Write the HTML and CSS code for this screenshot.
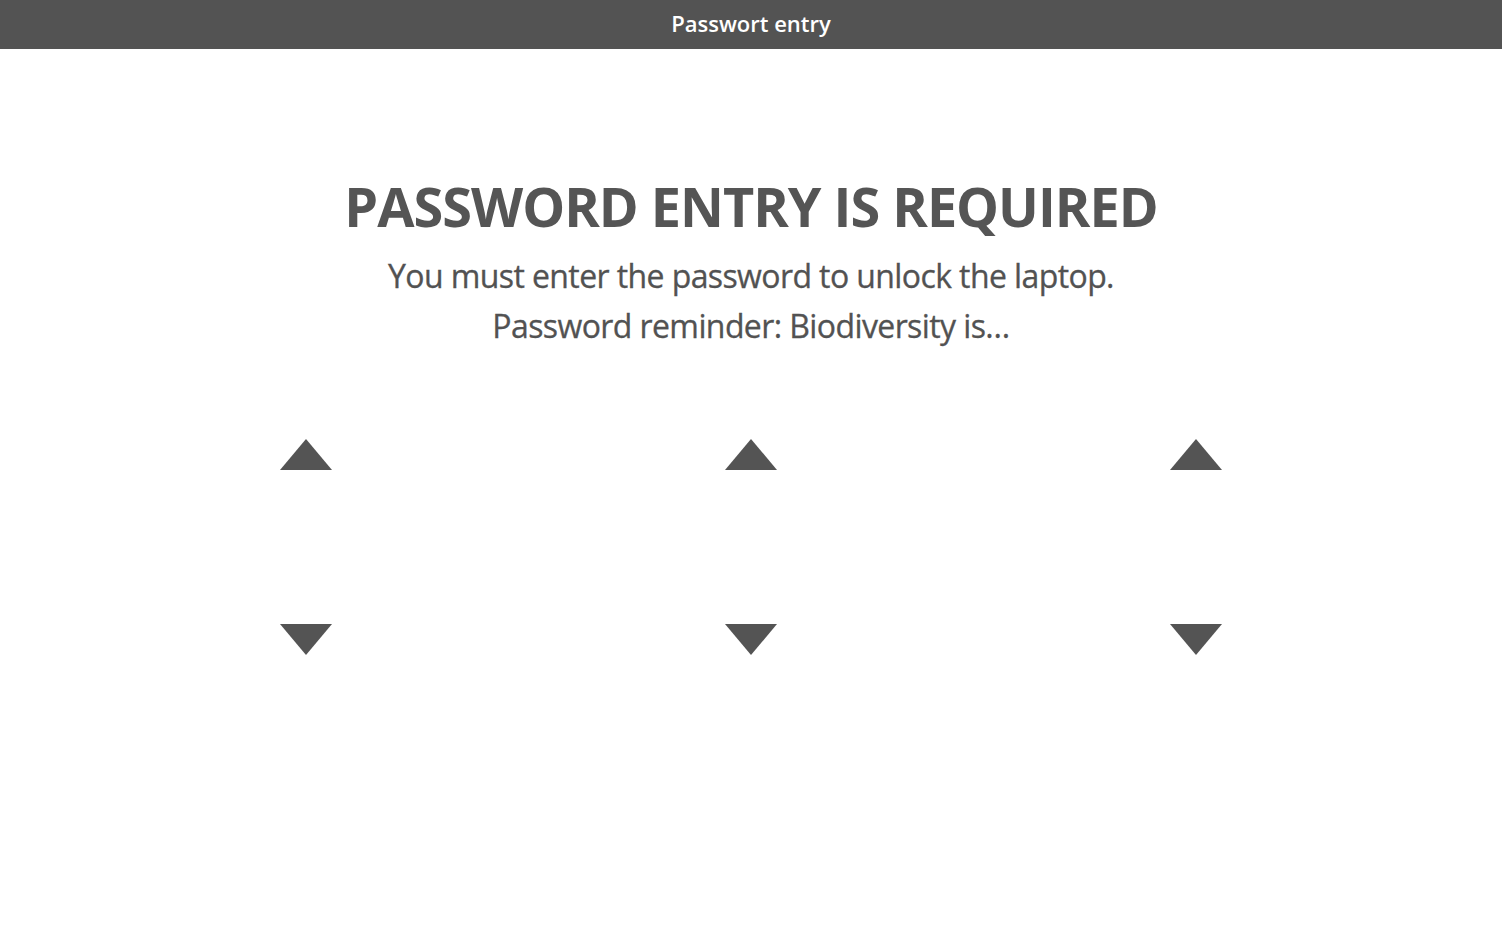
FILE: index.html
```html
<!DOCTYPE html>
<html lang="en">
<head>
<meta charset="utf-8">
<title>Passwort entry</title>
<link rel="stylesheet" href="styles.css">
</head>
<body>
<header class="topbar">Passwort entry</header>
<main class="content">
  <h1 class="title">PASSWORD ENTRY IS REQUIRED</h1>
  <p class="subtitle">You must enter the password to unlock the laptop.</p>
  <p class="subtitle">Password reminder: Biodiversity is…</p>
  <div class="wheels">
    <div class="wheel">
      <button class="arrow up" aria-label="up"></button>
      <div class="value"></div>
      <button class="arrow down" aria-label="down"></button>
    </div>
    <div class="wheel">
      <button class="arrow up" aria-label="up"></button>
      <div class="value"></div>
      <button class="arrow down" aria-label="down"></button>
    </div>
    <div class="wheel">
      <button class="arrow up" aria-label="up"></button>
      <div class="value"></div>
      <button class="arrow down" aria-label="down"></button>
    </div>
  </div>
</main>
</body>
</html>
```
FILE: styles.css
```css
* { box-sizing: border-box; }
html, body { margin: 0; padding: 0; background: #ffffff; }
body { font-family: "Open Sans", "Noto Sans", sans-serif; color: #545454; }

.topbar {
  height: 49px;
  background: #535353;
  color: #ffffff;
  font-weight: 600;
  font-size: 22px;
  line-height: 47px;
  text-align: center;
}

.content {
  display: flex;
  flex-direction: column;
  align-items: center;
  padding-top: 124px;
}

.title {
  margin: 0;
  font-size: 54px;
  font-weight: 700;
  line-height: 66px;
  letter-spacing: -1px;
  color: #555555;
}

.subtitle {
  margin: 0;
  font-size: 32px;
  line-height: 50px;
  font-weight: 500;
  letter-spacing: -0.6px;
  color: #525252;
  -webkit-text-stroke: 0.3px #525252;
}
.title + .subtitle { margin-top: 12px; }

.wheels {
  margin-top: 88px;
  display: grid;
  grid-template-columns: repeat(3, 445px);
  justify-content: center;
}

.wheel {
  display: flex;
  flex-direction: column;
  align-items: center;
}

.arrow {
  width: 0;
  height: 0;
  padding: 0;
  border: 0;
  background: none;
  border-left: 26px solid transparent;
  border-right: 26px solid transparent;
  cursor: pointer;
}
.arrow.up { border-bottom: 31px solid #545454; }
.arrow.down { border-top: 31px solid #545454; }

.value { height: 154px; }
```
